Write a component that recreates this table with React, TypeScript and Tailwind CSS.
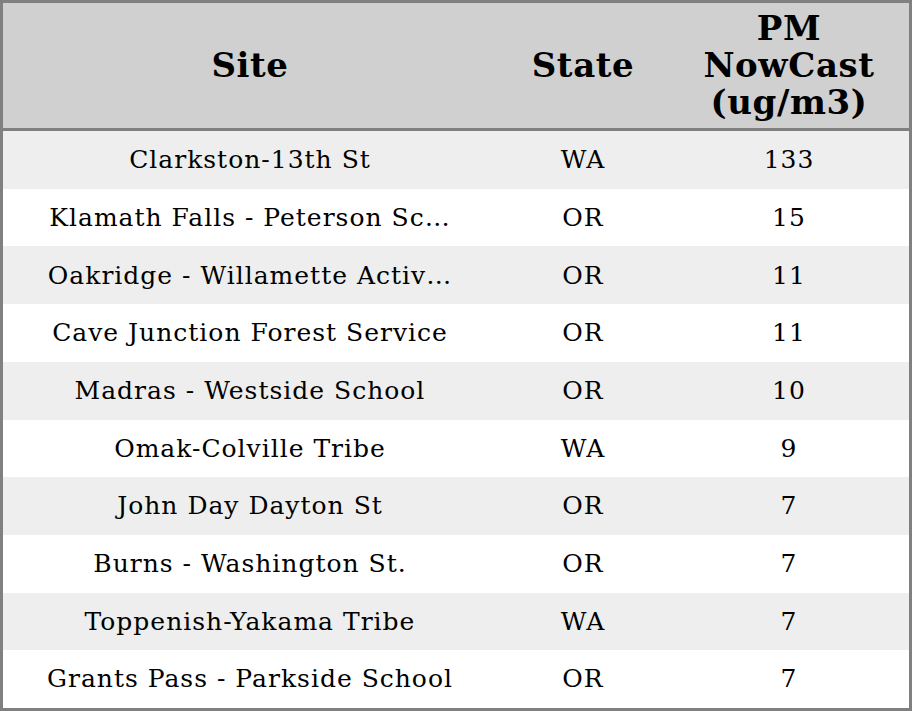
const rows = [
  { site: "Clarkston-13th St", state: "WA", pm: "133" },
  { site: "Klamath Falls - Peterson Sc…", state: "OR", pm: "15" },
  { site: "Oakridge - Willamette Activ…", state: "OR", pm: "11" },
  { site: "Cave Junction Forest Service", state: "OR", pm: "11" },
  { site: "Madras - Westside School", state: "OR", pm: "10" },
  { site: "Omak-Colville Tribe", state: "WA", pm: "9" },
  { site: "John Day Dayton St", state: "OR", pm: "7" },
  { site: "Burns - Washington St.", state: "OR", pm: "7" },
  { site: "Toppenish-Yakama Tribe", state: "WA", pm: "7" },
  { site: "Grants Pass - Parkside School", state: "OR", pm: "7" },
];

export default function App() {
  return (
    <div
      className="w-[912px] h-[711px] border-[3px] border-[#808080] bg-white flex flex-col text-black"
      style={{ fontFamily: '"DejaVu Serif", serif' }}
    >
      {/* header */}
      <div className="h-[128px] shrink-0 grid grid-cols-[494px_172px_1fr] items-center bg-[#d0d0d0] border-b-[3px] border-[#808080] text-[34px] font-bold leading-[37px] tracking-[0.6px] text-center">
        <div>Site</div>
        <div>State</div>
        <div>
          PM
          <br />
          NowCast
          <br />
          (ug/m3)
        </div>
      </div>

      {/* rows */}
      <div className="flex-1 flex flex-col">
        {rows.map((r, i) => (
          <div
            key={i}
            className={`flex-1 grid grid-cols-[494px_172px_1fr] items-center text-center text-[25px] tracking-[1px] ${
              i % 2 === 0 ? "bg-[#eeeeee]" : "bg-white"
            }`}
          >
            <div className="whitespace-nowrap">{r.site}</div>
            <div>{r.state}</div>
            <div>{r.pm}</div>
          </div>
        ))}
      </div>
    </div>
  );
}
